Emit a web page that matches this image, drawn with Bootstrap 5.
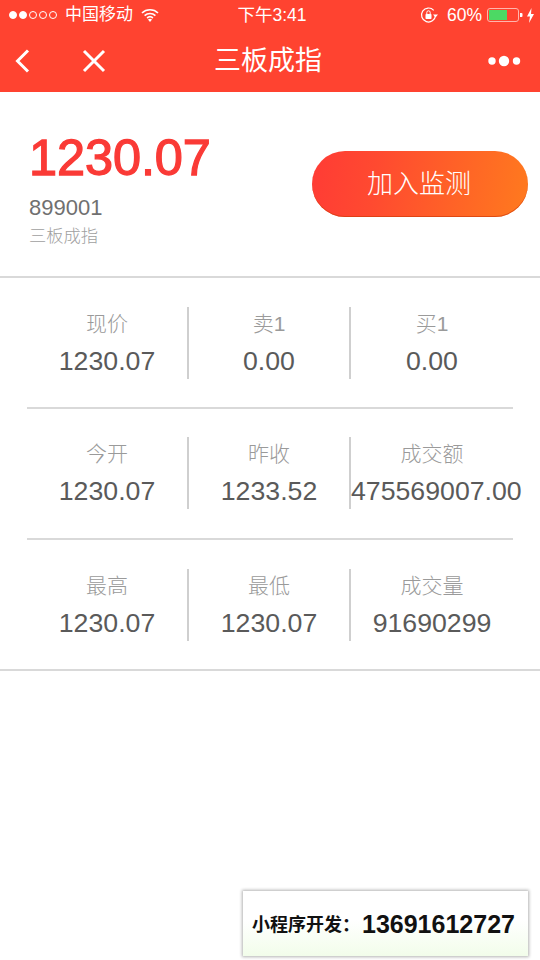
<!DOCTYPE html>
<html lang="zh-CN">
<head>
<meta charset="utf-8">
<title>三板成指</title>
<link href="https://cdn.jsdelivr.net/npm/bootstrap@5.3.0/dist/css/bootstrap.min.css" rel="stylesheet">
<style>
html,body{height:100%}
body{width:540px;height:960px;overflow:hidden;background:#fff;font-family:"Liberation Sans","Noto Sans CJK SC",sans-serif;font-weight:400}
.page-shell{height:960px}
.app-head{background:#ff4330;color:#fff;height:92px}
.status-row{height:30px;padding:0 6px 0 9px;font-size:17px;line-height:30px}
.status-carrier{width:227px;gap:8px}
.dots-signal{gap:2px}
.sig{width:8px;height:8px;border-radius:50%;border:1px solid #fff}
.sig-on{background:#fff}
.status-time{width:72px;text-align:center;white-space:nowrap;font-size:17.5px}
.status-right{flex:1;justify-content:flex-end;gap:5px;font-size:17.5px}
.bolt-gap{margin-left:-2px;margin-right:-1px}
.nav-row{height:62px;padding:0 18px 0 14px}
.nav-left{width:160px;gap:50px}
.nav-side{width:160px;justify-content:flex-end}
.nav-title{flex:1;text-align:center;font-size:27px;line-height:36px}
.summary{height:186px;padding:0 12px 0 29px;border-bottom:2px solid #d9d9d9}
.summary-text{margin-top:37px}
.big-price{font-size:50.5px;line-height:58px;font-weight:400;-webkit-text-stroke:1.3px #fa3a36;color:#fa3a36;letter-spacing:-.1px}
.code-line{font-size:22px;line-height:26px;color:#707070;margin-top:8px}
.name-line{font-size:17.25px;line-height:24px;color:#a0a0a0;margin-top:3px;font-weight:300}
.watch-btn{width:216px;height:66px;padding:0 14px 0 12px;border-radius:33px;border:0;color:#fff;font-size:26px;line-height:1;font-weight:300;background:linear-gradient(100deg,#ff3b35 0%,#ff4a30 30%,#ff7a1e 100%);box-shadow:inset 0 -1px 0 rgba(210,60,10,.7)}
.watch-btn:hover{color:#fff}
.quote-wrap{padding:0 27px;border-bottom:2px solid #d9d9d9;height:393px}
.quote-row{height:131px;align-items:center;border-bottom:2px solid #d9d9d9}
.quote-row:nth-child(2){padding-bottom:1px}
.quote-row:last-child{border-bottom:0;padding-bottom:2px}
.quote-cell{width:162px;height:72px;flex:0 0 162px;text-align:center;white-space:nowrap}
.quote-cell.sep{border-right:2px solid #cfcfcf}
.qc-label{font-size:21px;line-height:32px;color:#9a9a9a;font-weight:300;margin-top:1px}
.qc-value{font-size:26.7px;line-height:34px;color:#5a5a5a;margin-top:4px}
.promo-box{position:absolute;left:243px;top:891px;width:285px;height:65px;background:linear-gradient(180deg,#fff 0%,#fff 45%,#f2fdea 100%);box-shadow:0 0 3px 1px rgba(0,0,0,.3);color:#111;font-weight:700;white-space:nowrap;padding:3px 0 0 9px}
.promo-a{font-size:18px}
.promo-b{font-size:25px;margin-left:2px}
</style>
</head>
<body>
<div class="page-shell position-relative">
  <header class="app-head">
    <div class="status-row d-flex align-items-center">
      <div class="status-carrier d-flex align-items-center">
        <span class="dots-signal d-flex"><i class="sig sig-on"></i><i class="sig sig-on"></i><i class="sig"></i><i class="sig"></i><i class="sig"></i></span>
        <span>中国移动</span>
        <svg width="18" height="14" viewBox="0 0 18 14"><path d="M1 5a11.500 11.500 0 0 1 16 0M3.600 7.600a8 8 0 0 1 10.800 0M6.100 10a4.400 4.400 0 0 1 5.800 0" fill="none" stroke="#fff" stroke-width="1.700"/><path d="M9 14l-2-2.400a3 3 0 0 1 4 0z" fill="#fff"/></svg>
      </div>
      <div class="status-time">下午3:41</div>
      <div class="status-right d-flex align-items-center">
        <svg width="18" height="18" viewBox="0 0 18 18"><path d="M15.500 9.500a7 7 0 1 1-1.800-5.200" fill="none" stroke="#fff" stroke-width="1.200"/><path d="M13 8.500h5l-2.500 3z" fill="#fff"/><rect x="5.500" y="8" width="6" height="5" rx=".8" fill="#fff"/><path d="M6.800 8V6.500a1.700 1.700 0 0 1 3.400 0V8" fill="none" stroke="#fff" stroke-width="1"/></svg>
        <span class="ms-1">60%</span>
        <svg width="36" height="16" viewBox="0 0 36 16"><rect x=".5" y="1.500" width="31" height="13" rx="2.500" fill="none" stroke="#ffb5ad"/><rect x="2" y="3" width="18" height="10" fill="#4cd964"/><path d="M33 6h1.500a1 1 0 0 1 1 1v2a1 1 0 0 1-1 1H33z" fill="#fff"/></svg>
        <svg class="bolt-gap" width="9" height="15" viewBox="0 0 9 15"><path d="M5.500 0L1 8.500h3L3 15l5-9H5z" fill="#fff"/></svg>
      </div>
    </div>
    <div class="nav-row d-flex align-items-center">
      <div class="nav-left d-flex align-items-center">
        <svg width="18" height="26" viewBox="0 0 18 26"><path d="M14 2.500L3.500 13 14 23.500" fill="none" stroke="#fff" stroke-width="3"/></svg>
        <svg width="24" height="24" viewBox="0 0 24 24"><path d="M2 2l20 20M22 2L2 22" fill="none" stroke="#fff" stroke-width="3"/></svg>
      </div>
      <div class="nav-title">三板成指</div>
      <div class="nav-side d-flex align-items-center">
        <svg width="36" height="14" viewBox="0 0 36 14"><circle cx="6" cy="7" r="3.700" fill="#fff"/><circle cx="18" cy="7" r="5.200" fill="#fff"/><circle cx="30.500" cy="7" r="3.700" fill="#fff"/></svg>
      </div>
    </div>
  </header>

  <section class="summary d-flex align-items-start justify-content-between">
    <div class="summary-text">
      <div class="big-price">1230.07</div>
      <div class="code-line">899001</div>
      <div class="name-line">三板成指</div>
    </div>
    <button class="btn watch-btn align-self-center" type="button">加入监测</button>
  </section>

  <section class="quote-wrap">
    <div class="quote-row d-flex">
      <div class="quote-cell sep"><div class="qc-label">现价</div><div class="qc-value">1230.07</div></div>
      <div class="quote-cell sep"><div class="qc-label">卖1</div><div class="qc-value">0.00</div></div>
      <div class="quote-cell"><div class="qc-label">买1</div><div class="qc-value">0.00</div></div>
    </div>
    <div class="quote-row d-flex">
      <div class="quote-cell sep"><div class="qc-label">今开</div><div class="qc-value">1230.07</div></div>
      <div class="quote-cell sep"><div class="qc-label">昨收</div><div class="qc-value">1233.52</div></div>
      <div class="quote-cell"><div class="qc-label">成交额</div><div class="qc-value">475569007.00</div></div>
    </div>
    <div class="quote-row d-flex">
      <div class="quote-cell sep"><div class="qc-label">最高</div><div class="qc-value">1230.07</div></div>
      <div class="quote-cell sep"><div class="qc-label">最低</div><div class="qc-value">1230.07</div></div>
      <div class="quote-cell"><div class="qc-label">成交量</div><div class="qc-value">91690299</div></div>
    </div>
  </section>

  <aside class="promo-box d-flex align-items-center"><span class="promo-a">小程序开发：</span><span class="promo-b">13691612727</span></aside>
</div>
<script src="https://cdn.jsdelivr.net/npm/bootstrap@5.3.0/dist/js/bootstrap.bundle.min.js"></script>
</body>
</html>
